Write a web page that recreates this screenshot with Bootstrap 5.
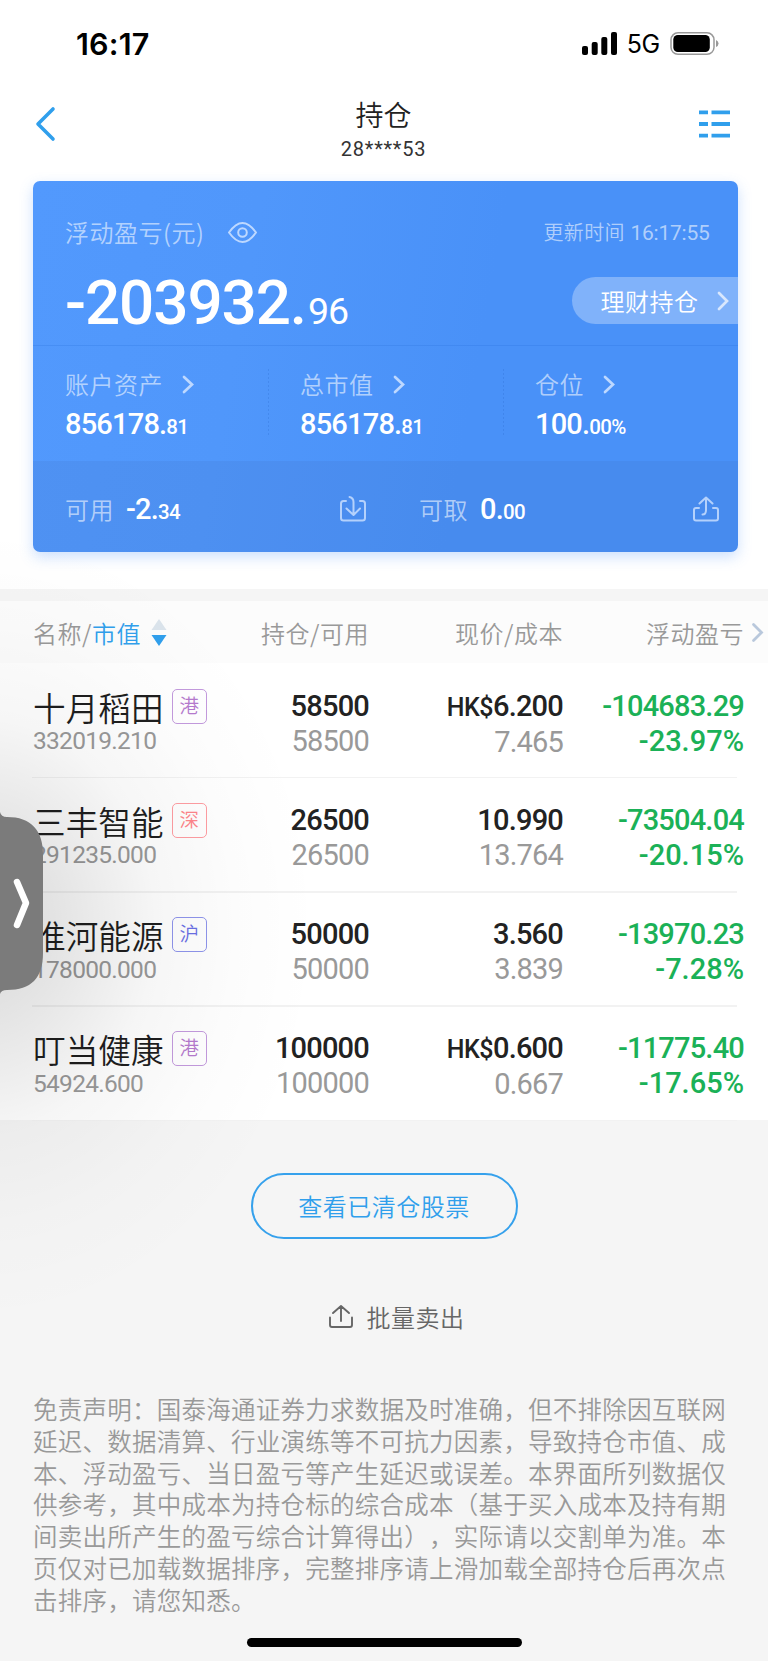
<!DOCTYPE html>
<html lang="zh-CN">
<head>
<meta charset="utf-8">
<meta name="viewport" content="width=device-width, initial-scale=1">
<title>持仓</title>
<link rel="stylesheet" href="https://cdn.jsdelivr.net/npm/bootstrap@5.3.0/dist/css/bootstrap.min.css">
<style>
body{font-family:Roboto,"Noto Sans CJK SC",sans-serif;background:#fff;color:#222;width:768px;height:1662px;overflow:hidden;font-size:24px;line-height:30px}
svg{display:block;flex:none;overflow:visible}
.cn{font-family:"Noto Sans CJK SC",sans-serif;font-weight:350;font-size:24px;letter-spacing:.5px;white-space:nowrap}
.num{font-family:Roboto,sans-serif;font-weight:500;font-size:29px;letter-spacing:-.8px;white-space:nowrap}
.num i{font-style:normal;font-size:20.5px;letter-spacing:-.7px}
.status{height:86px;padding:0 49px 0 76px;font-family:Inter,sans-serif;color:#000}
.clock{font-size:30.5px;font-weight:600;letter-spacing:.2px;margin-top:1px}
.net{font-size:25px;margin:2px 10.5px 0 10px;letter-spacing:-.6px}
.titlebar{height:95px;padding:0 38px 0 37px}
.account-name{font-size:28px;color:#222;line-height:32px;font-weight:350;letter-spacing:0}
.account-id{font-size:20px;line-height:24px;letter-spacing:.75px;font-weight:400;color:#333;margin-top:7px}
.asset{margin:0 30.5px 0 32.5px;height:371px;border-radius:7px;background:linear-gradient(100deg,#5299fd 0%,#5097fb 30%,#4991f8 62%,#4991f8 100%);box-shadow:0 5px 14px rgba(73,145,248,.28);color:#fff;overflow:hidden}
.asset .cn{color:rgba(255,255,255,.58)}
.asset-top{height:165px;border-bottom:1px solid rgba(40,110,220,.25)}
.profit{font-size:62px;line-height:70px;letter-spacing:-1.1px;margin-top:21px;font-weight:500}
.profit i{font-size:37.5px;letter-spacing:-1px;font-weight:400;margin-left:2px}
.stamp{font-size:20px!important;letter-spacing:.3px!important}
.stamp b{font:400 21px Roboto,sans-serif;letter-spacing:-.25px;margin-left:1px}
.asset .pill{width:166px;height:47px;border-radius:24px 0 0 24px;background:rgba(255,255,255,.3);padding:0 10px 0 29px;color:#fff}
.stats{height:114.5px}
.stat{width:235px;padding:23px 0 0 32.5px}
.stat .num{margin-top:9.5px}
.stat+.stat{background:repeating-linear-gradient(rgba(30,90,190,.22) 0 2px,transparent 2px 4px) 0 23px/1px 67px no-repeat}
.cash{height:91.5px;background:rgba(60,90,160,.1);padding:5px 19px 0 32.5px}
.cash .num{margin:3px 0 0 12px}
.gap-bar{height:12px;background:#f5f5f5;margin-top:37px}
.heads{height:62px;background:#fcfcfc;padding-left:33px;padding-top:1px}
.heads .cn{color:#999}
.heads .on{color:#309fec}
.c-name{width:181px}.c-qty{width:155px;text-align:right}.c-price{width:194px;text-align:right}.c-gain{width:181px;text-align:right}
.hold{height:114.25px;padding:25.5px 0 0 33px;position:relative}
.hold::after{content:"";position:absolute;left:32px;right:31px;bottom:-1px;height:1.5px;background:#f2f2f2}
.hold .num{line-height:35px}
.muted{color:#999;font-weight:400!important}
.gain{color:#1bb157}
.gain div{letter-spacing:0}
.stock{font-size:32.6px;letter-spacing:.1px;line-height:40px;color:#1e1e1e;font-weight:350;margin-top:-2px}
.hold .val{font-size:24.5px;letter-spacing:-.72px;line-height:26px;margin-top:1.5px;color:#999;font-weight:400}
.tag{width:35px;height:35px;border:1.5px solid;border-radius:5px;font-size:19.5px;line-height:30px;letter-spacing:0;text-align:center;margin-left:8px;margin-top:-3px}
.hk{color:#b57ace;border-color:#c39add}.sz{color:#ff858b;border-color:#ff9da2}.sh{color:#6b70e6;border-color:#8f95ec}
.hkd{font-size:25px;letter-spacing:-.5px}
.foot{height:540.5px;background:#f5f5f5}
.cleared{width:267px;height:66px;border:2px solid #36a1ec;border-radius:33px;padding:0;margin-top:52.5px;color:#309fec!important;line-height:60px}
.batch{margin-top:63px;height:30px;gap:14px;color:#666;margin-left:25px}
.note{margin:61.5px 0 0 33px;font-size:24.5px;letter-spacing:.25px;line-height:31.8px;color:#999;text-spacing-trim:space-all;font-feature-settings:"chws" 0,"halt" 0}
.home{position:absolute;left:247px;top:1637.5px;width:275px;height:9px;border-radius:5px;background:#000}
.shade{position:absolute;left:0;top:540px;width:420px;height:880px;pointer-events:none;background:radial-gradient(ellipse 340px 400px at -20px 385px,rgba(0,0,0,.16),rgba(0,0,0,.1) 25%,rgba(0,0,0,.035) 52%,rgba(0,0,0,.01) 76%,transparent)}
.drawer{position:absolute;left:0;top:812px}
</style>
</head>
<body class="position-relative">
<header>
 <div class="status d-flex align-items-center justify-content-between">
  <div class="clock">16:17</div>
  <div class="d-flex align-items-center">
   <svg width="35" height="23" viewBox="0 0 35 23"><rect y="14" width="6" height="9" rx="2"/><rect x="9.7" y="10" width="6" height="13" rx="2"/><rect x="19.3" y="5" width="6" height="18" rx="2"/><rect x="29" width="6" height="23" rx="2"/></svg>
   <div class="net">5G</div>
   <svg width="49" height="23" viewBox="0 0 49 23"><rect x="1" y=".8" width="43" height="21.5" rx="7" fill="none" stroke="#999" stroke-width="1.5"/><rect x="3.3" y="3" width="36.5" height="17" rx="4.5"/><path d="M46 8q2.5 1 2.5 3.5T46 15z" fill="#999"/></svg>
  </div>
 </div>
 <nav class="titlebar d-flex align-items-start justify-content-between">
  <svg width="31" height="36" viewBox="0 0 31 36" style="margin-top:20px"><path d="M16 3 1 18l15 15" fill="none" stroke="#309fec" stroke-width="3.6" stroke-linecap="round" stroke-linejoin="round"/></svg>
  <div class="text-center pt-2 mt-1">
   <div class="cn account-name">持仓</div>
   <div class="account-id num">28****53</div>
  </div>
  <svg width="31" height="28" viewBox="0 0 31 28" style="margin-top:24px"><path d="M0 2.3h9M12.500 2.300H31M0 14h9M12.500 14H31M0 25.700h9M12.500 25.700H31" stroke="#309fec" stroke-width="3.800"/></svg>
 </nav>
</header>

<section class="asset">
 <div class="asset-top d-flex justify-content-between">
  <div style="padding:36px 0 0 32.5px">
   <div class="d-flex align-items-center"><span class="cn">浮动盈亏(元)</span>
    <svg class="ms-4" width="29" height="21" viewBox="0 0 29 21" fill="none" stroke="#bdd8ff" stroke-width="2"><path d="M1 10.500C6 3.500 9.500 1 14.500 1S23 3.500 28 10.500C23 17.500 19.500 20 14.500 20S6 17.500 1 10.500z" stroke-linejoin="round"/><circle cx="14.500" cy="10.500" r="4.300"/></svg></div>
   <div class="num profit">-203932.<i>96</i></div>
  </div>
  <div class="d-flex flex-column align-items-end" style="padding-top:36px">
   <div class="cn stamp" style="padding-right:28px">更新时间 <b>16:17:55</b></div>
   <div class="cn pill d-flex align-items-center justify-content-between" style="margin-top:30px"><span>理财持仓</span><svg width="10" height="18" viewBox="0 0 10 18"><path d="m1 1 8 8-8 8" fill="none" stroke="#d8e7fd" stroke-width="2.700" stroke-linecap="round"/></svg></div>
  </div>
 </div>
 <div class="stats d-flex">
  <div class="stat"><div class="d-flex align-items-center"><span class="cn">账户资产</span><svg style="margin-left:20px" width="10" height="17" viewBox="0 0 10 17"><path d="m1 1 8 7.500-8 7.500" fill="none" stroke="#bdd8ff" stroke-width="2.700" stroke-linecap="round"/></svg></div><div class="num">856178.<i>81</i></div></div>
  <div class="stat"><div class="d-flex align-items-center"><span class="cn">总市值</span><svg style="margin-left:20px" width="10" height="17" viewBox="0 0 10 17"><path d="m1 1 8 7.500-8 7.500" fill="none" stroke="#bdd8ff" stroke-width="2.700" stroke-linecap="round"/></svg></div><div class="num">856178.<i>81</i></div></div>
  <div class="stat"><div class="d-flex align-items-center"><span class="cn">仓位</span><svg style="margin-left:20px" width="10" height="17" viewBox="0 0 10 17"><path d="m1 1 8 7.500-8 7.500" fill="none" stroke="#bdd8ff" stroke-width="2.700" stroke-linecap="round"/></svg></div><div class="num">100.<i>00%</i></div></div>
 </div>
 <div class="cash d-flex align-items-center">
  <div class="d-flex align-items-center" style="width:354px"><span class="cn">可用</span><span class="num">-2.<i>34</i></span>
   <svg class="ms-auto" style="margin-right:53px" width="26" height="26" viewBox="0 0 26 26" fill="none" stroke="#b4d1fc" stroke-width="2" stroke-linecap="round" stroke-linejoin="round"><path d="M6 5H3.500Q1 5 1 7.500V22q0 2.500 2.500 2.500h19Q25 24.500 25 22V7.500Q25 5 22.500 5H20M9.500 1q4 1 4 5v12.500M6.500 12.500l7 6.500 6.500-6.500"/></svg></div>
  <span class="cn">可取</span><span class="num">0.<i>00</i></span>
  <svg class="ms-auto" width="26" height="26" viewBox="0 0 26 26" fill="none" stroke="#b4d1fc" stroke-width="2" stroke-linecap="round" stroke-linejoin="round"><path d="M6 12H3q-2 0-2 2v8.500q0 2 2 2h20q2 0 2-2V14q0-2-2-2h-3M9.500 18.500q3.500 0 3.500-4.500V1.500M6.500 7.500l6.500-6 6.500 6"/></svg>
 </div>
</section>

<div class="gap-bar"></div>
<main>
 <div class="heads d-flex align-items-center">
  <div class="c-name cn d-flex align-items-center">名称/<span class="on">市值</span><svg style="margin-left:10px" width="16" height="27" viewBox="0 0 16 27"><path d="M8 0l7.500 11H.5z" fill="#dbe4ec"/><path d="M8 27 .5 16h15z" fill="#309fec"/></svg></div>
  <div class="c-qty cn">持仓/可用</div><div class="c-price cn">现价/成本</div><div class="c-gain cn">浮动盈亏</div>
  <svg style="margin-left:8px" width="11" height="19" viewBox="0 0 11 19"><path d="m1.500 1.500 8 8-8 8" fill="none" stroke="#b9c8dc" stroke-width="2.800" stroke-linecap="round"/></svg>
 </div>
 <div class="hold d-flex">
  <div class="c-name"><div class="d-flex align-items-center"><span class="cn stock">十月稻田</span><span class="cn tag hk">港</span></div><div class="num val">332019.210</div></div>
  <div class="c-qty num">58500<div class="muted">58500</div></div><div class="c-price num"><span class="hkd">HK$</span>6.200<div class="muted">7.465</div></div><div class="c-gain num gain">-104683.29<div>-23.97%</div></div>
 </div>
 <div class="hold d-flex">
  <div class="c-name"><div class="d-flex align-items-center"><span class="cn stock">三丰智能</span><span class="cn tag sz">深</span></div><div class="num val">291235.000</div></div>
  <div class="c-qty num">26500<div class="muted">26500</div></div><div class="c-price num">10.990<div class="muted">13.764</div></div><div class="c-gain num gain">-73504.04<div>-20.15%</div></div>
 </div>
 <div class="hold d-flex">
  <div class="c-name"><div class="d-flex align-items-center"><span class="cn stock">淮河能源</span><span class="cn tag sh">沪</span></div><div class="num val">178000.000</div></div>
  <div class="c-qty num">50000<div class="muted">50000</div></div><div class="c-price num">3.560<div class="muted">3.839</div></div><div class="c-gain num gain">-13970.23<div>-7.28%</div></div>
 </div>
 <div class="hold d-flex">
  <div class="c-name"><div class="d-flex align-items-center"><span class="cn stock">叮当健康</span><span class="cn tag hk">港</span></div><div class="num val">54924.600</div></div>
  <div class="c-qty num">100000<div class="muted">100000</div></div><div class="c-price num"><span class="hkd">HK$</span>0.600<div class="muted">0.667</div></div><div class="c-gain num gain">-11775.40<div>-17.65%</div></div>
 </div>
</main>
<footer class="foot d-flex flex-column">
 <button class="btn cn cleared align-self-center">查看已清仓股票</button>
 <div class="batch d-flex align-items-center justify-content-center"><svg width="24" height="23" viewBox="0 0 24 23" fill="none" stroke="#666" stroke-width="1.900" stroke-linecap="round" stroke-linejoin="round"><path d="M1 12.500V20q0 2 2 2h18q2 0 2-2v-7.500M12 16V1.500M4 8l8-7 8 7"/></svg><span class="cn">批量卖出</span></div>
 <p class="note cn">免责声明：国泰海通证券力求数据及时准确，但不排除因互联网<br>延迟、数据清算、行业演练等不可抗力因素，导致持仓市值、成<br>本、浮动盈亏、当日盈亏等产生延迟或误差。本界面所列数据仅<br>供参考，其中成本为持仓标的综合成本（基于买入成本及持有期<br>间卖出所产生的盈亏综合计算得出），实际请以交割单为准。本<br>页仅对已加载数据排序，完整排序请上滑加载全部持仓后再次点<br>击排序，请您知悉。</p>
</footer>
<div class="shade"></div>
<svg class="drawer" width="43" height="182" viewBox="0 0 43 182"><path d="M0 0Q1 5 7 5C31 5 43 18 43 43V141C43 166 31 178 7 178Q1 178 0 182z" fill="#7b7b7b"/><path d="m17 70 9 21-9 22" fill="none" stroke="#fff" stroke-width="6.500" stroke-linecap="round" stroke-linejoin="round"/></svg>
<div class="home"></div>
<script src="https://cdn.jsdelivr.net/npm/bootstrap@5.3.0/dist/js/bootstrap.bundle.min.js"></script>
</body>
</html>
